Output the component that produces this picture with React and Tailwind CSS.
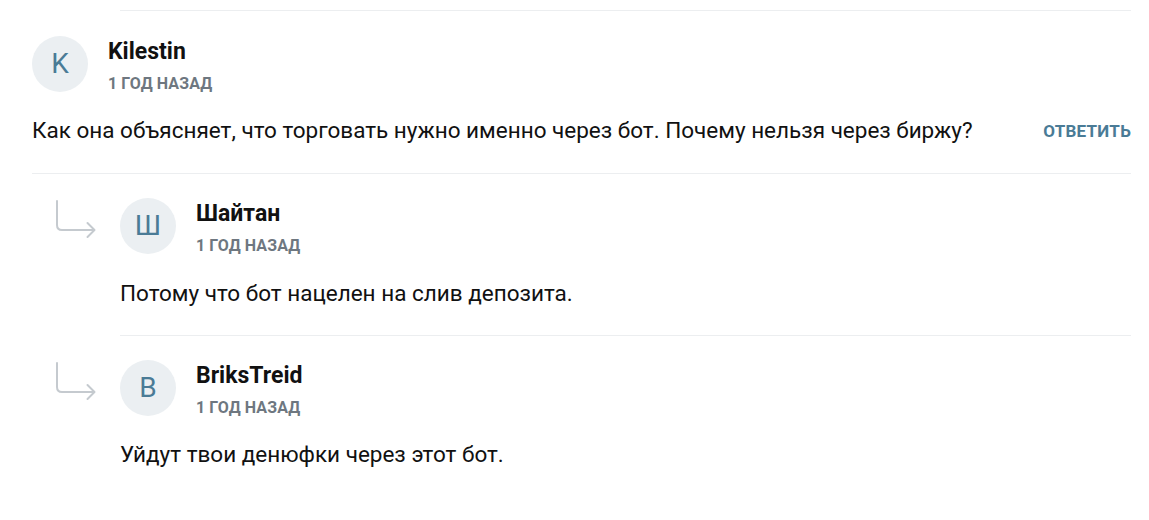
import React from "react";

const Arrow = () => (
  <svg width="42" height="42" viewBox="0 0 42 42" fill="none" className="shrink-0">
    <path d="M2 2 V26 Q2 31 7 31 H39" stroke="#c5cacf" strokeWidth="2" strokeLinecap="round" />
    <path d="M32.5 24 L39.5 31 L32.5 38" stroke="#c5cacf" strokeWidth="2" strokeLinecap="round" strokeLinejoin="round" />
  </svg>
);

const Avatar = ({ letter }) => (
  <div className="w-14 h-14 rounded-full bg-[#ebeff2] flex items-center justify-center text-[#4a7b96] text-[28px] shrink-0">
    {letter}
  </div>
);

const Header = ({ letter, name }) => (
  <div className="flex items-start gap-5 h-14">
    <Avatar letter={letter} />
    <div className="flex flex-col pt-[3px]">
      <div className="text-[23px] font-bold text-[#111] leading-[26px]">{name}</div>
      <div className="text-[16px] font-bold text-[#6e7780] tracking-[0.1px] leading-[16px] mt-[11px]">1 ГОД НАЗАД</div>
    </div>
  </div>
);

export default function App() {
  return (
    <div className="w-[1149px] h-[520px] bg-white" style={{ fontFamily: "Roboto, 'Liberation Sans', sans-serif" }}>
      <div className="pl-8 pr-[18px]">
        <div className="ml-[88px] h-[11px] border-b border-[#eceef0]" />
        <div className="pt-[25px]">
          <Header letter="K" name="Kilestin" />
          <div className="flex items-center justify-between mt-[23px]">
            <div className="text-[22.5px] text-[#111] leading-[30px]">
              Как она объясняет, что торговать нужно именно через бот. Почему нельзя через биржу?
            </div>
            <div className="text-[17px] font-bold text-[#4a7b96] tracking-[0.25px] mt-[3px]">ОТВЕТИТЬ</div>
          </div>
        </div>
        <div className="mt-[28px] border-b border-[#eceef0]" />
        <div className="flex mt-[24px]">
          <div className="pl-[23px] w-[88px] pt-[1px]">
            <Arrow />
          </div>
          <div className="flex-1">
            <Header letter="Ш" name="Шайтан" />
            <div className="text-[22.5px] text-[#111] leading-[30px] mt-[24px]">Потому что бот нацелен на слив депозита.</div>
            <div className="mt-[27px] border-b border-[#eceef0]" />
          </div>
        </div>
        <div className="flex mt-[24px]">
          <div className="pl-[23px] w-[88px] pt-[1px]">
            <Arrow />
          </div>
          <div className="flex-1">
            <Header letter="B" name="BriksTreid" />
            <div className="text-[22.5px] text-[#111] leading-[30px] mt-[23px]">Уйдут твои денюфки через этот бот.</div>
          </div>
        </div>
      </div>
    </div>
  );
}
